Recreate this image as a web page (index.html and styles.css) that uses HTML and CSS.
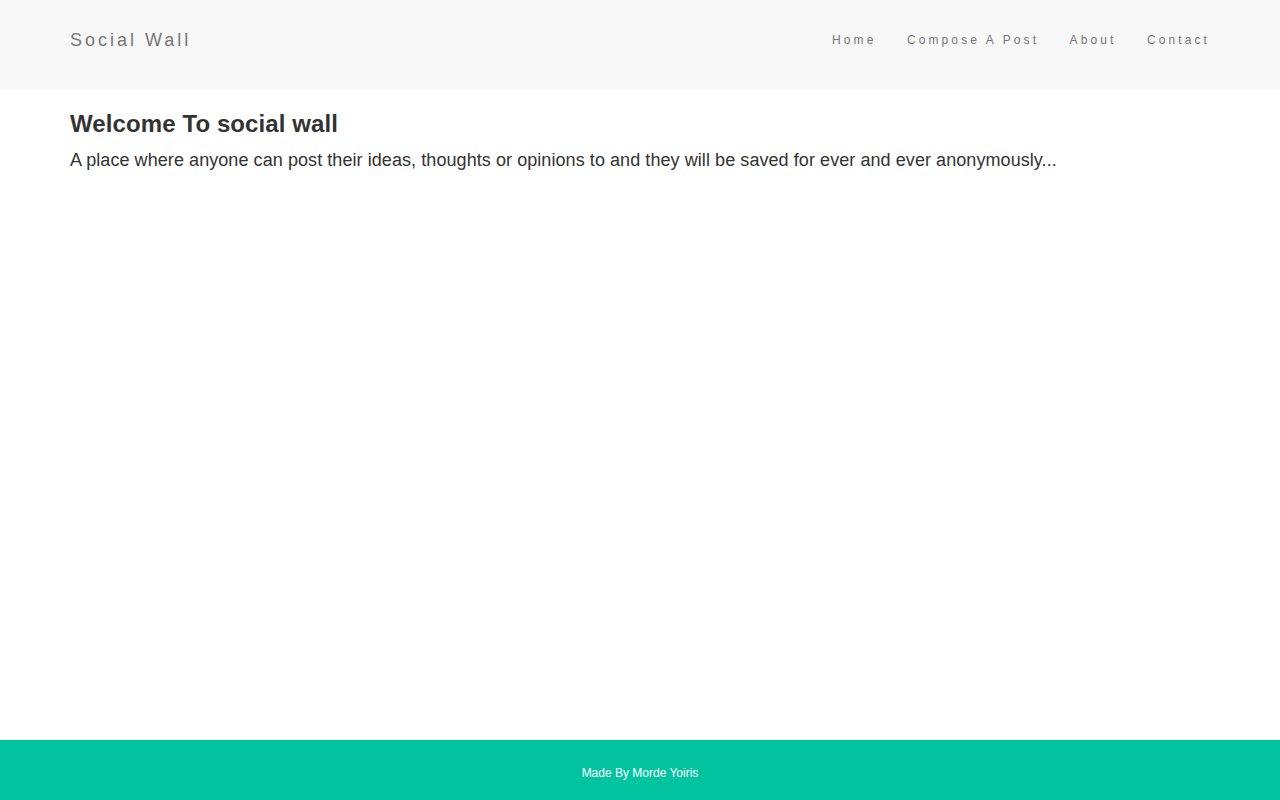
FILE: index.html
```html
<!DOCTYPE html>
<html>
<head>
<meta charset="utf-8">
<title>Social Wall</title>
<link rel="stylesheet" href="styles.css">
</head>
<body>
<div class="page">
  <header class="navbar">
    <div class="container nav-inner">
      <a class="brand" href="#">Social Wall</a>
      <nav class="nav-links">
        <a href="#">Home</a>
        <a href="#">Compose A Post</a>
        <a href="#">About</a>
        <a href="#">Contact</a>
      </nav>
    </div>
  </header>
  <main class="container main">
    <h1 class="title">Welcome To social wall</h1>
    <p class="lead">A place where anyone can post their ideas, thoughts or opinions to and they will be saved for ever and ever anonymously...</p>
  </main>
  <footer class="footer">Made By Morde Yoiris</footer>
</div>
</body>
</html>
```

FILE: styles.css
```css
* { box-sizing: border-box; }
html, body { margin: 0; padding: 0; height: 100%; }
body {
  font-family: "Liberation Sans", Arial, Helvetica, sans-serif;
  color: #333;
  background: #fff;
}
.page {
  min-height: 800px;
  display: flex;
  flex-direction: column;
}
.container {
  width: 1170px;
  margin: 0 auto;
  padding: 0 15px;
}
.navbar {
  background: #f8f8f8;
  height: 90px;
  display: flex;
  align-items: center;
  padding-bottom: 10px;
}
.nav-inner {
  display: flex;
  justify-content: space-between;
  align-items: center;
}
.brand {
  color: #777;
  text-decoration: none;
  font-size: 18px;
  letter-spacing: 3px;
}
.nav-links {
  display: flex;
  gap: 30.5px;
}
.nav-links a {
  color: #777;
  text-decoration: none;
  font-size: 12px;
  letter-spacing: 3.1px;
}
.main {
  flex: 1;
}
.title {
  margin: 20px 0 0;
  font-size: 24px;
  font-weight: bold;
  letter-spacing: 0.1px;
  line-height: 28px;
}
.lead {
  margin: 10px 0 0;
  font-size: 18px;
  letter-spacing: 0.07px;
  line-height: 24px;
}
.footer {
  background: #02c39f;
  color: #fff;
  height: 60px;
  display: flex;
  align-items: center;
  justify-content: center;
  font-size: 12px;
  padding-top: 6px;
}
```
